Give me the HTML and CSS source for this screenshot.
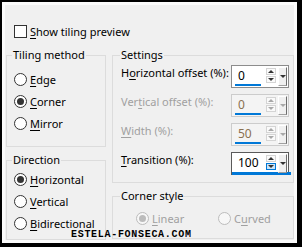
FILE: index.html
```html
<html>
<head>
    <title>Tiling</title>
    <link rel="stylesheet" href="styles.css">
</head>
<body>
    <div class="frame">
        <div class="window">
            <div class="check-row">
                <span class="checkbox"></span>
                <span><u>S</u>how tiling preview</span>
            </div>
            <div class="columns">
                <div class="col">
                    <fieldset class="group">
                        <legend>Tiling method</legend>
                        <div class="opts tiling">
                            <div class="opt"><span class="radio"></span><span><u>E</u>dge</span></div>
                            <div class="opt"><span class="radio on"></span><span><u>C</u>orner</span></div>
                            <div class="opt"><span class="radio"></span><span><u>M</u>irror</span></div>
                        </div>
                    </fieldset>
                    <fieldset class="group next">
                        <legend>Direction</legend>
                        <div class="opts direction">
                            <div class="opt"><span class="radio on"></span><span><u>H</u>orizontal</span></div>
                            <div class="opt"><span class="radio"></span><span><u>V</u>ertical</span></div>
                            <div class="opt"><span class="radio"></span><span><u>B</u>idirectional</span></div>
                        </div>
                    </fieldset>
                </div>
                <div class="col right">
                    <fieldset class="group">
                        <legend>Settings</legend>
                        <div class="fields">
                            <div class="field">
                                <span class="label">H<u>o</u>rizontal offset (%):</span>
                                <div class="spin">
                                    <div class="spin-val"><span class="num">0</span><span class="bar"></span></div>
                                    <div class="spin-arrows"><span class="arr"><i class="up"></i></span><span class="arr"><i class="down"></i></span></div>
                                    <div class="spin-drop"><i class="down"></i></div>
                                </div>
                            </div>
                            <div class="field off">
                                <span class="label">Ver<u>t</u>ical offset (%):</span>
                                <div class="spin">
                                    <div class="spin-val"><span class="num">0</span><span class="bar"></span></div>
                                    <div class="spin-arrows"><span class="arr"><i class="up"></i></span><span class="arr"><i class="down"></i></span></div>
                                    <div class="spin-drop"><i class="down"></i></div>
                                </div>
                            </div>
                            <div class="field off">
                                <span class="label"><u>W</u>idth (%):</span>
                                <div class="spin">
                                    <div class="spin-val"><span class="num">50</span><span class="bar"></span></div>
                                    <div class="spin-arrows"><span class="arr"><i class="up"></i></span><span class="arr"><i class="down"></i></span></div>
                                    <div class="spin-drop"><i class="down"></i></div>
                                </div>
                            </div>
                            <div class="field focus">
                                <span class="label"><u>T</u>ransition (%):</span>
                                <div class="spin">
                                    <div class="spin-val"><span class="num">100</span><span class="bar"></span></div>
                                    <div class="spin-arrows"><span class="arr"><i class="up"></i></span><span class="arr hot"><i class="down"></i></span></div>
                                    <div class="spin-drop"><i class="down"></i></div>
                                </div>
                            </div>
                        </div>
                    </fieldset>
                    <fieldset class="group next">
                        <legend>Corner style</legend>
                        <div class="opts corner">
                            <div class="opt off wide"><span class="radio on"></span><span><u>L</u>inear</span></div>
                            <div class="opt off"><span class="radio"></span><span>C<u>u</u>rved</span></div>
                        </div>
                    </fieldset>
                </div>
            </div>
        </div>
        <div class="watermark">ESTELA-FONSECA.COM</div>
    </div>
</body>
</html>
```

FILE: styles.css
```css
body {
    margin: 0;
    font-family: "Noto Sans", sans-serif;
    font-size: 11px;
    color: #000;
    white-space: nowrap;
}
u {
    text-decoration-thickness: 1px;
    text-underline-offset: 2px;
}
.frame {
    position: relative;
    width: 302px;
    height: 247px;
    box-sizing: border-box;
    border-style: solid;
    border-color: #000;
    border-width: 2px 5px 4px 2px;
    background: #fbfbfb;
    padding: 3px;
}
.window {
    height: 100%;
    box-sizing: border-box;
    background: #f0f0f0;
    padding: 18px 0 0 1px;
}
.check-row {
    display: flex;
    align-items: center;
    gap: 3px;
    height: 16px;
    padding-left: 8px;
}
.checkbox {
    width: 13px;
    height: 13px;
    box-sizing: border-box;
    border: 1px solid #333;
    background: #fff;
}
.columns {
    display: grid;
    grid-template-columns: 100px 182px;
    column-gap: 6px;
    margin-top: 8px;
}
.group {
    margin: 0;
    padding: 0;
    min-width: 0;
    border: 1px solid #dcdcdc;
}
.group legend {
    margin-left: 5px;
    padding: 0 1px;
    line-height: 16px;
}
.right .group legend {
    margin-left: 7px;
}
.next {
    margin-top: 5px;
}
.opts {
    padding-left: 7px;
}
.tiling {
    padding-top: 5px;
    padding-bottom: 12px;
}
.direction {
    padding-bottom: 5px;
}
.corner {
    display: flex;
    padding: 3px 0 9px 23px;
}
.opt {
    display: flex;
    align-items: center;
    gap: 3px;
    height: 22px;
}
.opt.wide {
    width: 82px;
}
.radio {
    display: inline-grid;
    place-items: center;
    width: 13px;
    height: 13px;
    box-sizing: border-box;
    border: 1px solid #333;
    border-radius: 50%;
    background: #fff;
}
.radio.on::after {
    content: "";
    width: 7px;
    height: 7px;
    border-radius: 50%;
    background: #333;
}
.opt.off {
    color: #a0a0a0;
}
.opt.off .radio {
    border-color: #bcbcbc;
    background: #f7f7f7;
}
.opt.off .radio.on::after {
    background: #bcbcbc;
}
.fields {
    padding: 2px 4px 7px 8px;
}
.field {
    display: flex;
    justify-content: space-between;
    height: 23px;
    margin-top: 6px;
}
.field:first-child {
    margin-top: 0;
}
.label {
    line-height: 16px;
}
.field.off .label {
    color: #a0a0a0;
}
.spin {
    display: flex;
    width: 58px;
    box-sizing: border-box;
    border: 1px solid #8c8c8c;
    background: #fff;
}
.spin-val {
    flex: 1;
    display: flex;
    flex-direction: column;
    justify-content: space-between;
    padding: 2px 0 1px 3px;
}
.num {
    padding-left: 3px;
    line-height: 15px;
    font-size: 12px;
}
.bar {
    width: 26px;
    height: 2px;
    background: #0078d7;
}
.spin-arrows {
    display: flex;
    flex-direction: column;
    margin: 2px 2px 0 0;
}
.arr {
    display: grid;
    place-items: center;
    width: 10px;
    height: 7px;
    box-sizing: border-box;
    border: 1px solid #d4d4d4;
    background: #fafafa;
}
.arr + .arr {
    margin-top: 1px;
}
.arr.hot {
    border-color: #0078d7;
    background: #cce4f7;
}
.up, .down {
    width: 0;
    height: 0;
    border-left: 3px solid transparent;
    border-right: 3px solid transparent;
}
.up {
    border-bottom: 3px solid #333;
}
.down {
    border-top: 3px solid #333;
}
.spin-drop {
    display: grid;
    place-items: center;
    width: 9px;
    margin: 1px 1px 1px 0;
    box-sizing: border-box;
    border-left: 1px solid #fff;
    border-top: 1px solid #fff;
    border-right: 1px solid #6d6d6d;
    border-bottom: 1px solid #a0a0a0;
    background: #f0f0f0;
}
.field.off .spin {
    border-color: #cccccc;
    background: #f4f4f4;
}
.field.off .num {
    color: #8a7050;
}
.field.off .up {
    border-bottom-color: #a8a8a8;
}
.field.off .down {
    border-top-color: #a8a8a8;
}
.field.focus .spin {
    border-color: #5a5a5a;
}
.field.focus .spin-val {
    padding-left: 0;
    padding-bottom: 0;
    margin-bottom: -1px;
}
.field.focus .num {
    padding-left: 6px;
}
.field.focus .bar {
    width: auto;
    height: 3px;
    margin-right: -25px;
}
.watermark {
    position: absolute;
    left: 69px;
    top: 228px;
    font-family: "Liberation Mono", monospace;
    font-weight: bold;
    font-size: 10px;
    line-height: 10px;
    letter-spacing: 0.7px;
}
```
